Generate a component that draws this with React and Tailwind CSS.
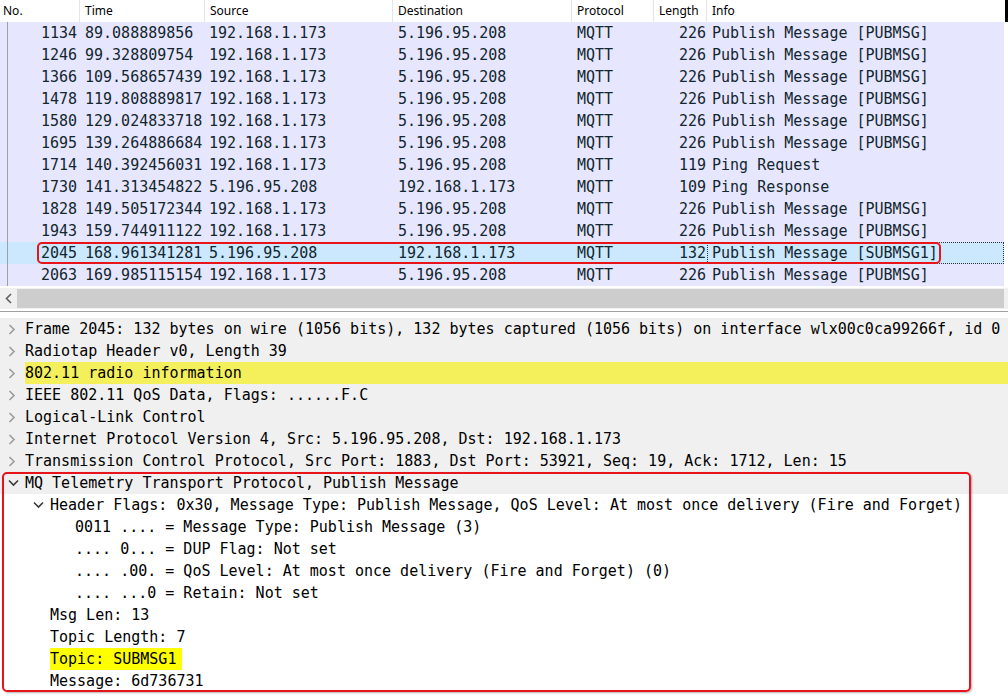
const mono = { fontFamily: '"DejaVu Sans Mono", "Liberation Mono", monospace' }

const cols = [
  { key: 'no', label: 'No.', w: 'w-[80px]' },
  { key: 'time', label: 'Time', w: 'w-[125px]' },
  { key: 'src', label: 'Source', w: 'w-[188px]' },
  { key: 'dst', label: 'Destination', w: 'w-[179px]' },
  { key: 'proto', label: 'Protocol', w: 'w-[82px]' },
  { key: 'len', label: 'Length', w: 'w-[53px]' },
  { key: 'info', label: 'Info', w: 'flex-1' },
]

const packets = [
  ['1134', '89.088889856', '192.168.1.173', '5.196.95.208', '226', 'Publish Message [PUBMSG]'],
  ['1246', '99.328809754', '192.168.1.173', '5.196.95.208', '226', 'Publish Message [PUBMSG]'],
  ['1366', '109.568657439', '192.168.1.173', '5.196.95.208', '226', 'Publish Message [PUBMSG]'],
  ['1478', '119.808889817', '192.168.1.173', '5.196.95.208', '226', 'Publish Message [PUBMSG]'],
  ['1580', '129.024833718', '192.168.1.173', '5.196.95.208', '226', 'Publish Message [PUBMSG]'],
  ['1695', '139.264886684', '192.168.1.173', '5.196.95.208', '226', 'Publish Message [PUBMSG]'],
  ['1714', '140.392456031', '192.168.1.173', '5.196.95.208', '119', 'Ping Request'],
  ['1730', '141.313454822', '5.196.95.208', '192.168.1.173', '109', 'Ping Response'],
  ['1828', '149.505172344', '192.168.1.173', '5.196.95.208', '226', 'Publish Message [PUBMSG]'],
  ['1943', '159.744911122', '192.168.1.173', '5.196.95.208', '226', 'Publish Message [PUBMSG]'],
  ['2045', '168.961341281', '5.196.95.208', '192.168.1.173', '132', 'Publish Message [SUBMSG1]', true],
  ['2063', '169.985115154', '192.168.1.173', '5.196.95.208', '226', 'Publish Message [PUBMSG]'],
]

const tree = [
  { t: 'Frame 2045: 132 bytes on wire (1056 bits), 132 bytes captured (1056 bits) on interface wlx00c0ca99266f, id 0', top: true },
  { t: 'Radiotap Header v0, Length 39', top: true },
  { t: '802.11 radio information', top: true, hl: true },
  { t: 'IEEE 802.11 QoS Data, Flags: ......F.C', top: true },
  { t: 'Logical-Link Control', top: true },
  { t: 'Internet Protocol Version 4, Src: 5.196.95.208, Dst: 192.168.1.173', top: true },
  { t: 'Transmission Control Protocol, Src Port: 1883, Dst Port: 53921, Seq: 19, Ack: 1712, Len: 15', top: true },
  { t: 'MQ Telemetry Transport Protocol, Publish Message', top: true, open: true },
  { t: 'Header Flags: 0x30, Message Type: Publish Message, QoS Level: At most once delivery (Fire and Forget)', lvl: 1, open: true },
  { t: '0011 .... = Message Type: Publish Message (3)', lvl: 2 },
  { t: '.... 0... = DUP Flag: Not set', lvl: 2 },
  { t: '.... .00. = QoS Level: At most once delivery (Fire and Forget) (0)', lvl: 2 },
  { t: '.... ...0 = Retain: Not set', lvl: 2 },
  { t: 'Msg Len: 13', lvl: 1, leaf: true },
  { t: 'Topic Length: 7', lvl: 1, leaf: true },
  { t: 'Topic: SUBMSG1', lvl: 1, leaf: true, mark: true },
  { t: 'Message: 6d736731', lvl: 1, leaf: true },
]

function Chevron({ open }) {
  return open ? (
    <svg width="11" height="8" viewBox="0 0 11 8" className="shrink-0">
      <path d="M1 1.5 L5.5 6 L10 1.5" fill="none" stroke="#3a3a3a" strokeWidth="1.6" />
    </svg>
  ) : (
    <svg width="8" height="11" viewBox="0 0 8 11" className="shrink-0">
      <path d="M1.5 1 L6 5.5 L1.5 10" fill="none" stroke="#9c9c9c" strokeWidth="1.6" />
    </svg>
  )
}

function PacketRow({ p }) {
  const sel = p[6]
  return (
    <div className={`flex h-[22px] items-center text-[15px] text-[#12272e] ${sel ? 'bg-[#cce8ff]' : 'bg-[#e7e6ff]'}`}>
      <div className="ml-[7px] flex h-full w-[73px] items-center justify-end border-l border-[#a0a0a0] pr-[3px]">{p[0]}</div>
      <div className="w-[125px] pl-[5px]">{p[1]}</div>
      <div className="w-[188px] pl-[4px]">{p[2]}</div>
      <div className="w-[179px] pl-[5px]">{p[3]}</div>
      <div className="w-[82px] pl-[5px]">MQTT</div>
      <div className="w-[53px] pr-[1px] text-right">{p[4]}</div>
      <div className={`flex h-full flex-1 items-center ${sel ? 'border border-dotted border-[#333] pl-[4px]' : 'pl-[5px]'}`}>{p[5]}</div>
    </div>
  )
}

function TreeRow({ r }) {
  const pad = r.lvl === 2 ? 'pl-[75px]' : r.lvl === 1 ? 'pl-[33px]' : 'pl-[8px]'
  return (
    <div className={`flex h-[22px] items-center text-[15px] text-black ${r.top ? 'bg-[#f0f0f0]' : 'bg-white'} ${pad}`}>
      {r.lvl !== 2 && !r.leaf && (
        <div className="flex w-[17px] shrink-0 items-center">
          <Chevron open={r.open} />
        </div>
      )}
      {r.leaf && <div className="w-[17px] shrink-0" />}
      <div className={`flex h-full items-center whitespace-nowrap ${r.hl ? 'flex-1 bg-[#f4f05b]' : ''}`}>
        <span className={r.mark ? 'bg-[#ffff00] pr-[6px]' : ''}>{r.t}</span>
      </div>
    </div>
  )
}

export default function App() {
  return (
    <div className="relative h-[696px] w-[1008px] overflow-hidden bg-white" style={mono}>
      <div className="flex h-[22px] items-center bg-white text-[12px] text-black" style={{ fontFamily: '"Noto Sans", "Liberation Sans", sans-serif' }}>
        {cols.map((c, i) => (
          <div key={c.key} className={`flex h-full items-center ${c.w} ${i === 0 ? 'pl-[3px]' : 'pl-[5px]'} ${i < cols.length - 1 ? 'border-r border-[#e5e5e5]' : ''}`}>
            {c.label}
          </div>
        ))}
        <div className="h-full w-[3px] bg-black" />
      </div>

      <div className="mr-[4px]">
        {packets.map((p) => (
          <PacketRow key={p[0]} p={p} />
        ))}
      </div>

      <div className="mt-[2px] flex h-[21px] bg-[#f0f0f0]">
        <div className="flex w-[17px] items-center justify-center">
          <svg width="7" height="11" viewBox="0 0 7 11">
            <path d="M6 1 L1.5 5.5 L6 10" fill="none" stroke="#606060" strokeWidth="1.6" />
          </svg>
        </div>
        <div className="my-[1px] mr-[4px] flex-1 bg-[#cdcdcd]" />
      </div>
      <div className="h-[2px] bg-white" />
      <div className="h-px bg-[#a0a0a0]" />
      <div className="h-[6px] bg-white" />

      <div>
        {tree.map((r, i) => (
          <TreeRow key={i} r={r} />
        ))}
      </div>

      <div className="absolute left-[37px] top-[242px] h-[22px] w-[904px] rounded-[5px] border-2 border-[#e8141b]" />
      <div className="absolute left-[2px] top-[472px] h-[220px] w-[969px] rounded-[5px] border-2 border-[#e8141b] shadow-[1px_1px_2px_rgba(0,0,0,0.3)]" />
    </div>
  )
}
